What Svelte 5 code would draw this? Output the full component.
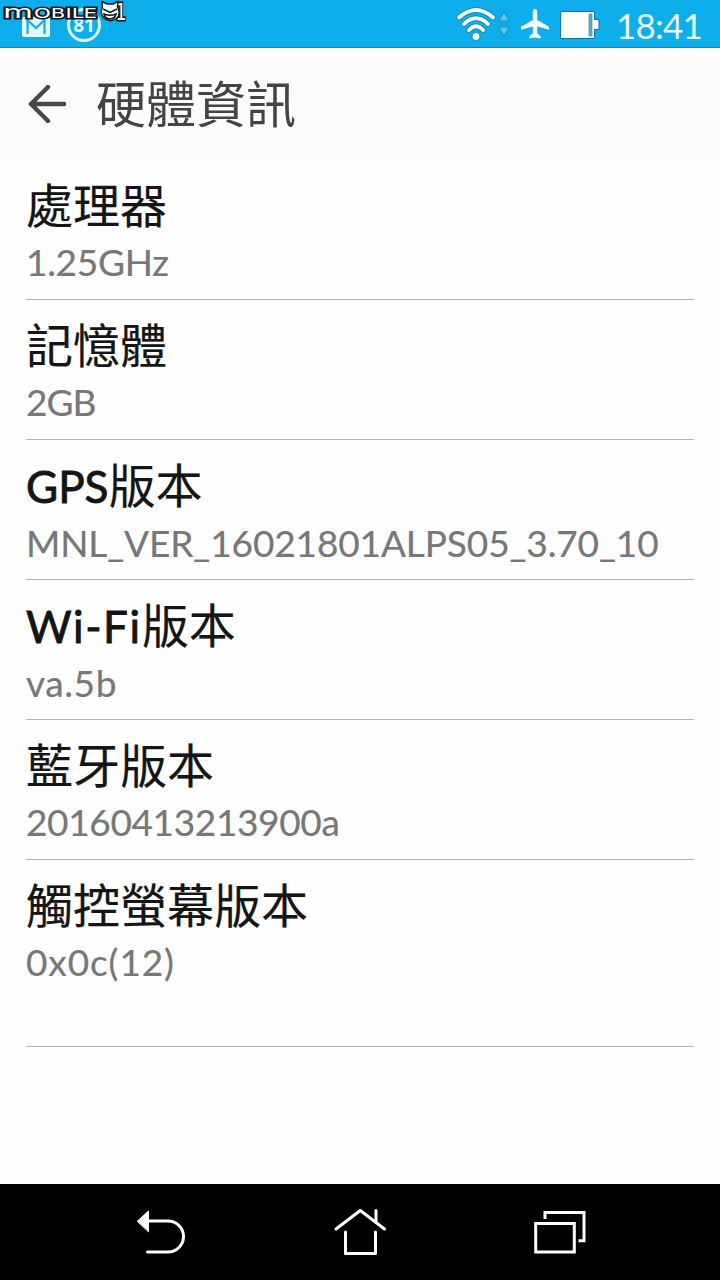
<script>
    const time = '18:41';
    const notifications = 81;

    const items = [
        { latin: '',      label: '處理器',       value: '1.25GHz', spacing: -0.3 },
        { latin: '',      label: '記憶體',       value: '2GB', spacing: -1 },
        { latin: 'GPS',   label: '版本',         value: 'MNL_VER_16021801ALPS05_3.70_10', spacing: -0.12 },
        { latin: 'Wi-Fi', label: '版本',         value: 'va.5b', spacing: 0.6, latinSpacing: 1.6 },
        { latin: '',      label: '藍牙版本',     value: '20160413213900a', spacing: -0.36 },
        { latin: '',      label: '觸控螢幕版本', value: '0x0c(12)', spacing: 0.9 },
    ];
</script>

<div class="screen">
    <div class="status-bar">
        <svg class="mail" width="28" height="20" viewBox="0 0 28 20">
            <rect width="28" height="20" rx="2" fill="#e4fbff" />
            <path d="M5.500 17V3l8.500 8 8.500-8v14" fill="none" stroke="#0eaeec" stroke-width="2.2" />
        </svg>
        <span class="count">{notifications}</span>

        <svg class="wifi" width="40" height="34" viewBox="0 0 40 34">
            <g fill="none" stroke-linecap="round">
                <path d="M3 10.500Q20-4.500 37 10.500M8 17Q20 5.500 32 17M13 23Q20 15.500 27 23" stroke="#0878a8" stroke-width="5.400" />
                <path d="M3 10.500Q20-4.500 37 10.500M8 17Q20 5.500 32 17M13 23Q20 15.500 27 23" stroke="#f2fdff" stroke-width="4" />
            </g>
            <circle cx="20" cy="29.500" r="4" fill="#fff" stroke="#0878a8" stroke-width=".8" />
        </svg>
        <svg class="traffic" width="12" height="26" viewBox="0 0 12 26">
            <path d="M6 .7L11.300 10H.700zM6 25.300L.700 16h10.600z" fill="#59c8ee" stroke="#168bb9" />
        </svg>
        <svg class="plane" width="28" height="30" viewBox="0 0 28 30">
            <path d="M14 0c-1.400 0-2.200 1.200-2.200 3v8L0 17.800v3l11.800-3.200v7L8.500 27v2.600l5.500-1.200 5.500 1.200V27l-3.300-2.400v-7L28 20.800v-3L16.200 11V3C16.200 1.200 15.400 0 14 0z" fill="#f4fdff" />
        </svg>
        <svg class="battery" width="40" height="28" viewBox="0 0 40 28">
            <path d="M.500.500h34v8H39v10h-4.500v9H.500z" fill="#fff" stroke="#0878a8" />
            <path d="M29 3h3v22h-3z" fill="#64a9cd" stroke="#2c86b1" stroke-width=".6" />
        </svg>
        <span class="time">{time}</span>

        <svg class="brand" width="134" height="28" viewBox="0 0 134 28">
            <g class="brand-text">
                <text class="wide-m" x="3" y="17.500" textLength="30" lengthAdjust="spacingAndGlyphs">m</text>
                <text x="34" y="17.500" textLength="63" lengthAdjust="spacingAndGlyphs">OBILE</text>
                <text class="one" transform="translate(115.500 20) scale(.75 1)">1</text>
            </g>
            <path d="M102.500 7l-.5-5.500 5 2.500h6l5-2.500-.5 5.500q4 7-1 11.500-6 4.500-12 0-5.500-5-2-11.500z" fill="#fff" stroke="#10151a" stroke-width="1.400" />
            <path d="M103 9l7 3.500 7-3.500M104 14q6 2.500 12 0-1 5-6 5-5 0-6-5z" fill="none" stroke="#10151a" stroke-width="1.500" />
        </svg>
    </div>

    <header class="header">
        <svg class="back" width="38" height="38" viewBox="0 0 38 38">
            <path d="M20 2L3 19l17 17M3 19h33" />
        </svg>
        <h1>硬體資訊</h1>
    </header>

    <main class="list">
        {#each items as item}
            <section class="item">
                <h2>{#if item.latin}<span class="latin" style="letter-spacing: {item.latinSpacing ?? 0}px">{item.latin}</span>{/if}{item.label}</h2>
                <p style="letter-spacing: {item.spacing}px">{item.value}</p>
            </section>
        {/each}
    </main>

    <nav class="nav-bar">
        <button aria-label="Back">
            <svg width="90" height="80" viewBox="0 0 90 80">
                <path d="M28 29h20a15.300 15.300 0 0 1 0 31H27.500" />
                <path d="M17.500 29L28.500 19v20.500z" class="solid" />
            </svg>
        </button>
        <button aria-label="Home">
            <svg width="90" height="80" viewBox="0 0 90 80">
                <path d="M18 37l24.300-18.500L66.500 37M58 30V18.500M27.500 40v21.500h30V40" />
            </svg>
        </button>
        <button aria-label="Recent apps">
            <svg width="90" height="80" viewBox="0 0 90 80">
                <path class="square" d="M20.700 31.500h38.600v28.500H20.700zM30 27v-6.500h39v28.200H63.500" />
            </svg>
        </button>
    </nav>
</div>

<style>
    :global(body) {
        margin: 0;
        background: #fff;
    }

    .screen {
        width: 720px;
        height: 1280px;
        display: flex;
        flex-direction: column;
        overflow: hidden;
        background: #fefefe;
        font-family: Lato, "Noto Sans CJK TC", sans-serif;
    }

    .status-bar {
        position: relative;
        height: 48px;
        box-sizing: border-box;
        display: flex;
        align-items: flex-start;
        background: #0eaeec;
        border-bottom: 1px solid #078bc2;
        flex-shrink: 0;
    }

    .mail { margin: 17px 0 0 22px; }

    .count {
        width: 34px;
        height: 34px;
        margin: 8px 0 0 17px;
        box-sizing: border-box;
        border: 3px solid #dbf9ff;
        border-radius: 50%;
        color: #e4fbff;
        font: 700 19px/29px "Open Sans", sans-serif;
        text-align: center;
    }

    .wifi { margin: 7px 0 0 auto; }
    .traffic { margin: 11px 0 0 2px; }
    .plane { margin: 9px 0 0 11px; }
    .battery { margin: 11px 0 0 11px; }

    .time {
        width: 86px;
        margin: 3px 18px 0 16px;
        font-size: 35px;
        line-height: 44px;
        letter-spacing: -0.8px;
        color: #e8fcff;
        white-space: nowrap;
    }

    .brand {
        position: absolute;
        left: 0;
        top: 0;
    }

    .brand-text {
        font-family: "DejaVu Sans", sans-serif;
        font-size: 14px;
        fill: #fff;
        stroke: #10151a;
        stroke-width: 3px;
        paint-order: stroke;
    }

    .wide-m {
        font-size: 18px;
    }

    .one {
        font-size: 23px;
    }

    .header {
        height: 112px;
        display: flex;
        align-items: center;
        padding-left: 28px;
        gap: 30px;
        background: #fcfcfc;
        flex-shrink: 0;
    }

    .back {
        fill: none;
        stroke: #484848;
        stroke-width: 4.4;
        stroke-linecap: round;
        stroke-linejoin: round;
    }

    h1 {
        margin: 0;
        font-size: 50px;
        line-height: 72px;
        font-weight: 400;
        color: #444;
    }

    .list {
        flex: 1;
        padding: 0 26px;
    }

    .item {
        height: 140px;
        box-sizing: border-box;
        border-bottom: 1px solid #b4b4b4;
        padding-top: 15px;
    }

    .item:last-child { height: 187px; }

    h2 {
        margin: 0;
        font-size: 47px;
        line-height: 60px;
        font-weight: 400;
        color: #151515;
        -webkit-text-stroke: 0.2px #151515;
        white-space: nowrap;
    }

    .latin {
        font-size: 44px;
        -webkit-text-stroke: 0.9px #151515;
    }

    p {
        margin: 4px 0 0;
        font-size: 37px;
        line-height: 46px;
        color: #777;
        -webkit-text-stroke: 0.2px #777;
        white-space: nowrap;
    }

    .nav-bar {
        height: 96px;
        display: flex;
        justify-content: space-between;
        align-items: center;
        padding: 0 115px 0 120px;
        background: #000;
        flex-shrink: 0;
    }

    button {
        padding: 0;
        border: 0;
        background: none;
        line-height: 0;
    }

    .nav-bar path {
        fill: none;
        stroke: #fff;
        stroke-width: 3;
        stroke-linecap: round;
        stroke-linejoin: round;
    }

    .nav-bar .solid {
        fill: #fff;
        stroke-width: 1;
    }

    .nav-bar .square {
        stroke-linecap: butt;
        stroke-linejoin: miter;
    }
</style>
